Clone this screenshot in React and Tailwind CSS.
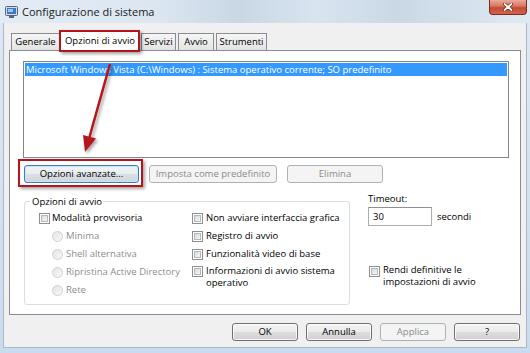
import React from "react";

function Btn({ children, className = "", disabled, focused }) {
  let look =
    "border-[#707070] bg-[linear-gradient(to_bottom,#f3f3f3_0%,#ebebeb_50%,#dddddd_51%,#d0d0d0_100%)] text-black shadow-[inset_0_0_0_1px_rgba(255,255,255,0.8)]";
  if (disabled) look = "border-[#adb2b5] bg-[#f4f4f4] text-[#8b8b8b]";
  if (focused)
    look =
      "border-[#3c7fb1] bg-[linear-gradient(to_bottom,#f1f4f6_0%,#e9edf0_50%,#dbe0e4_51%,#ced4d9_100%)] text-black shadow-[inset_0_0_0_1px_#c8e6f9]";
  return (
    <div
      className={`relative h-[18px] rounded-[3px] border flex items-center justify-center ${look} ${className}`}
    >
      {children}
    </div>
  );
}

function Check() {
  return (
    <span className="block w-[11px] h-[11px] shrink-0 border border-[#8f8f8f] bg-white p-[1px]">
      <span className="block w-full h-full border border-[#b4b8bd] bg-[linear-gradient(135deg,#d9d9d9,#f7f7f7)]" />
    </span>
  );
}

function Radio() {
  return (
    <span className="block w-[11px] h-[11px] shrink-0 rounded-full border border-[#cfcfcf] bg-[linear-gradient(135deg,#e4e4e4,#f9f9f9)]" />
  );
}

export default function App() {
  return (
    <div className="relative w-[530px] h-[353px] overflow-hidden bg-[linear-gradient(to_bottom,#dfe9f4,#c9dbee)] font-['Open_Sans',sans-serif] text-[9.5px] leading-none text-black">
      {/* title bar */}
      <div className="h-[23px] flex items-start bg-[linear-gradient(to_right,#e3ecf5_0%,#dbe6f1_30%,#c9d7e5_45%,#d8e4f0_60%,#cad8e6_75%,#dfe9f3_100%)]">
        <svg className="ml-[5px] mt-[6px]" width="13" height="12" viewBox="0 0 13 12">
          <rect x="0.5" y="0.5" width="12" height="9" rx="1" fill="#d7dde6" stroke="#56657a" />
          <rect x="2" y="2" width="9" height="6" fill="#3a78c8" />
          <rect x="3" y="3" width="5" height="3" fill="#9cc6f0" />
          <rect x="4" y="10" width="5" height="2" fill="#56657a" />
        </svg>
        <span className="ml-[4px] mt-[6px] text-[11px] text-[#1b1b1b]">Configurazione di sistema</span>
        <div className="ml-auto mr-[3px] w-[38px] h-[15px] rounded-b-[4px] border border-t-0 border-[#7a2a1e] bg-[linear-gradient(to_bottom,#e9ab9b_0%,#d7735e_45%,#c64a34_55%,#d0644a_100%)] flex items-center justify-center">
          <svg width="10" height="8" viewBox="0 0 10 8">
            <path d="M1.5 1 L8.5 7 M8.5 1 L1.5 7" stroke="#5b1a12" strokeWidth="3.2" strokeLinecap="round" />
            <path d="M1.5 1 L8.5 7 M8.5 1 L1.5 7" stroke="#ffffff" strokeWidth="1.8" strokeLinecap="round" />
          </svg>
        </div>
      </div>

      {/* dialog body */}
      <div className="mx-[3px] h-[325px] bg-[#f0f0f0] border border-t-0 border-[#a9b8c8] pt-[7px] px-[5px] flex flex-col">
        {/* tabs */}
        <div className="relative z-10 h-[20px] flex items-end">
          <div className="ml-[2px] w-[49px] h-[17px] border border-b-0 border-[#898c95] bg-[linear-gradient(to_bottom,#f6f6f6,#e3e3e3)] flex items-center justify-center">
            Generale
          </div>
          <div className="relative w-[80px] h-[21px] -mb-[1px] border border-b-0 border-[#898c95] bg-white flex items-start justify-center pt-[5px]">
            Opzioni di avvio
            <span className="absolute left-[-2px] right-[-1px] top-[-1px] bottom-[-1px] border-2 border-[#b5141c] shadow-[2px_2px_3px_rgba(0,0,0,0.35)]" />
          </div>
          <div className="ml-[1px] w-[35px] h-[17px] border border-b-0 border-[#898c95] bg-[linear-gradient(to_bottom,#f6f6f6,#e3e3e3)] flex items-center justify-center">
            Servizi
          </div>
          <div className="ml-[2px] w-[36px] h-[17px] border border-b-0 border-[#898c95] bg-[linear-gradient(to_bottom,#f6f6f6,#e3e3e3)] flex items-center justify-center">
            Avvio
          </div>
          <div className="ml-[2px] w-[51px] h-[17px] border border-b-0 border-[#898c95] bg-[linear-gradient(to_bottom,#f6f6f6,#e3e3e3)] flex items-center justify-center">
            Strumenti
          </div>
        </div>

        {/* tab panel */}
        <div className="h-[265px] border border-[#898c95] bg-white pl-[13px] pt-[10px] flex flex-col">
          <div className="w-[486px] h-[97px] border border-[#828790] p-[1px]">
            <div className="h-[13px] bg-[#3399ff] text-white pl-[1px] flex items-center whitespace-nowrap">
              {"Microsoft Windows Vista (C:\\Windows) : Sistema operativo corrente; SO predefinito"}
            </div>
          </div>

          <div className="mt-[7px] flex">
            <Btn focused className="ml-[1px] w-[115px]">
              Opzioni avanzate...
              <span className="absolute left-[-7px] right-[-5px] top-[-7px] bottom-[-5px] border-2 border-[#b5141c] shadow-[2px_2px_3px_rgba(0,0,0,0.35)]" />
            </Btn>
            <Btn disabled className="ml-[10px] w-[128px]">
              Imposta come predefinito
            </Btn>
            <Btn disabled className="ml-[10px] w-[96px]">
              Elimina
            </Btn>
          </div>

          <div className="mt-[9px] flex items-start">
            {/* group box */}
            <div className="relative ml-[1px] mt-[9px] w-[326px] h-[104px] border border-[#d5dfe5] rounded-[3px] pt-[7px] pl-[14px] flex">
              <span className="absolute left-[5px] top-[-6px] bg-white px-[2px] leading-[12px]">
                Opzioni di avvio
              </span>
              <div className="w-[153px] flex flex-col">
                <div className="h-[18px] flex items-center gap-[2px]">
                  <Check />
                  <span>Modalità provvisoria</span>
                </div>
                {["Minima", "Shell alternativa", "Ripristina Active Directory", "Rete"].map((t) => (
                  <div key={t} className="h-[18px] ml-[13px] flex items-center gap-[3px] text-[#8d8d8d]">
                    <Radio />
                    <span>{t}</span>
                  </div>
                ))}
              </div>
              <div className="flex flex-col">
                <div className="h-[18px] flex items-center gap-[3px]">
                  <Check />
                  <span>Non avviare interfaccia grafica</span>
                </div>
                <div className="h-[18px] flex items-center gap-[3px]">
                  <Check />
                  <span>Registro di avvio</span>
                </div>
                <div className="h-[18px] flex items-center gap-[3px]">
                  <Check />
                  <span>Funzionalità video di base</span>
                </div>
                <div className="flex items-start gap-[3px]">
                  <div className="mt-[3px]">
                    <Check />
                  </div>
                  <span className="mt-[2px] leading-[12px]">
                    Informazioni di avvio sistema
                    <br />
                    operativo
                  </span>
                </div>
              </div>
            </div>

            {/* timeout column */}
            <div className="ml-[18px] flex flex-col">
              <span className="leading-[14px]">Timeout:</span>
              <div className="mt-[1px] flex items-center">
                <div className="w-[64px] h-[19px] border border-[#abadb3] border-t-[#8e9095] bg-white pl-[4px] flex items-center">
                  30
                </div>
                <span className="ml-[5px]">secondi</span>
              </div>
              <div className="mt-[38px] ml-[1px] flex items-start gap-[3px]">
                <div className="mt-[2px]">
                  <Check />
                </div>
                <span className="leading-[12px]">
                  Rendi definitive le
                  <br />
                  impostazioni di avvio
                </span>
              </div>
            </div>
          </div>
        </div>

        {/* bottom buttons */}
        <div className="mt-[8px] mr-[1px] flex justify-end gap-[8px]">
          <Btn className="w-[66px]">OK</Btn>
          <Btn className="w-[66px]">Annulla</Btn>
          <Btn disabled className="w-[66px]">
            Applica
          </Btn>
          <Btn className="w-[66px]">?</Btn>
        </div>
      </div>

      {/* red annotation arrow */}
      <svg className="absolute inset-0 pointer-events-none" width="530" height="353" viewBox="0 0 530 353">
        <defs>
          <filter id="sh" x="-20%" y="-20%" width="140%" height="140%">
            <feDropShadow dx="2" dy="2" stdDeviation="1.5" floodColor="#000" floodOpacity="0.35" />
          </filter>
        </defs>
        <g filter="url(#sh)">
          <line x1="110" y1="64" x2="89.5" y2="137" stroke="#b5141c" strokeWidth="2.5" />
          <polygon points="85,152 83,135 96,138.5" fill="#b5141c" />
        </g>
      </svg>
    </div>
  );
}
